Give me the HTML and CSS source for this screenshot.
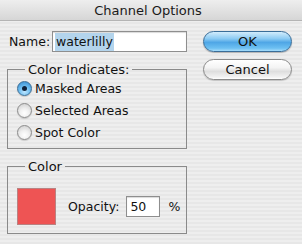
FILE: index.html
```html
<!DOCTYPE html>
<html>
<head>
<meta charset="utf-8">
<link rel="stylesheet" href="styles.css">
</head>
<body>
<div class="window">
  <div class="titlebar"><span class="title">Channel Options</span></div>
  <div class="content">
    <div class="left">
      <div class="name-row">
        <span class="label">Name:</span>
        <div class="field name-field"><span class="sel">waterlilly</span></div>
      </div>
      <fieldset class="group group-indicates">
        <legend>Color Indicates:</legend>
        <div class="radio-row"><span class="radio checked"></span><span>Masked Areas</span></div>
        <div class="radio-row"><span class="radio"></span><span>Selected Areas</span></div>
        <div class="radio-row"><span class="radio"></span><span>Spot Color</span></div>
      </fieldset>
      <fieldset class="group group-color">
        <legend>Color</legend>
        <div class="color-row">
          <div class="swatch"></div>
          <span class="opacity-label">Opacity:</span>
          <div class="field opacity-field">50</div>
          <span class="pct">%</span>
        </div>
      </fieldset>
    </div>
    <div class="buttons">
      <div class="btn btn-ok">OK</div>
      <div class="btn btn-cancel">Cancel</div>
    </div>
  </div>
</div>
</body>
</html>
```
FILE: styles.css
```css
html, body {
  margin: 0;
  padding: 0;
}
body {
  width: 302px;
  height: 244px;
  overflow: hidden;
  font-family: "DejaVu Sans", "Liberation Sans", sans-serif;
  font-size: 12.5px;
  color: #111;
  background: repeating-linear-gradient(to bottom, #eeeeee 0, #eeeeee 2px, #e7e7e7 2px, #e7e7e7 4px);
}
.window {
  width: 302px;
  height: 244px;
}
.titlebar {
  height: 20px;
  border-bottom: 1px solid #b4b4b4;
  background: linear-gradient(to bottom, #eeeeee 0%, #e2e2e2 50%, #d6d6d6 100%);
  display: flex;
  align-items: center;
  justify-content: center;
  padding-right: 6px;
  font-size: 13px;
  color: #1a1a1a;
}
.content {
  display: flex;
  padding: 10px 0 0 7px;
  gap: 16px;
}
.left {
  width: 180px;
  display: flex;
  flex-direction: column;
}
.name-row {
  display: flex;
  align-items: center;
  height: 21px;
}
.label {
  padding-left: 2px;
}
.field {
  background: #fff;
  border: 1px solid #8e8e8e;
  box-shadow: inset 0 1px 1px rgba(0,0,0,0.15);
  box-sizing: border-box;
  display: flex;
  align-items: center;
}
.name-field {
  margin-left: auto;
  width: 135px;
  height: 21px;
  padding-left: 2px;
}
.sel {
  background: #b3d4ec;
  padding: 1px 1px;
  line-height: 16px;
}
.group {
  margin: 10px 0 0 0;
  padding: 0;
  border: 1px solid #8a8a8a;
  min-width: 0;
}
.group legend {
  margin-left: 17px;
  padding: 0 3px;
  font-size: 13px;
  line-height: 15px;
}
.group-indicates {
  padding-bottom: 5px;
}
.radio-row {
  height: 22px;
  display: flex;
  align-items: center;
  padding-left: 9px;
  gap: 3px;
}
.radio {
  width: 15px;
  height: 15px;
  box-sizing: border-box;
  border-radius: 50%;
  border: 1px solid #8c8c8c;
  background: radial-gradient(circle at 50% 70%, #ffffff 0%, #f0f0f0 40%, #c8c8c8 100%);
  box-shadow: 0 1px 1px rgba(0,0,0,0.15);
  position: relative;
}
.radio.checked {
  border-color: #3c6e96;
  background: radial-gradient(circle at 50% 75%, #bfe6ff 0%, #6fbef0 45%, #2f86cc 100%);
}
.radio.checked::after {
  content: "";
  position: absolute;
  left: 4px;
  top: 4px;
  width: 5px;
  height: 5px;
  border-radius: 50%;
  background: #10223a;
}
.group-color {
  padding: 14px 0 8px 0;
}
.color-row {
  display: flex;
  align-items: center;
  padding-left: 9px;
}
.swatch {
  width: 39px;
  height: 37px;
  box-sizing: border-box;
  border: 1px solid #b98282;
  background: #ee5454;
}
.opacity-label {
  margin-left: 12px;
}
.opacity-field {
  margin-left: 7px;
  width: 34px;
  height: 21px;
  padding-left: 3px;
}
.pct {
  margin-left: 8px;
}
.buttons {
  display: flex;
  flex-direction: column;
  gap: 7px;
  padding-top: 0;
}
.btn {
  width: 89px;
  height: 21px;
  box-sizing: border-box;
  border-radius: 11px;
  display: flex;
  align-items: center;
  justify-content: center;
  font-size: 13px;
  color: #111;
}
.btn-ok {
  border: 1px solid #3a6d98;
  background: linear-gradient(to bottom, #d2ecfc 0%, #8ccbf3 35%, #4fa6e6 55%, #6dc0f2 85%, #a6dcfa 100%);
  box-shadow: 0 1px 1px rgba(0,0,0,0.25);
}
.btn-cancel {
  border: 1px solid #8a8a8a;
  background: linear-gradient(to bottom, #ffffff 0%, #f4f4f4 40%, #dedede 60%, #f2f2f2 90%, #ffffff 100%);
  box-shadow: 0 1px 1px rgba(0,0,0,0.18);
}
```
